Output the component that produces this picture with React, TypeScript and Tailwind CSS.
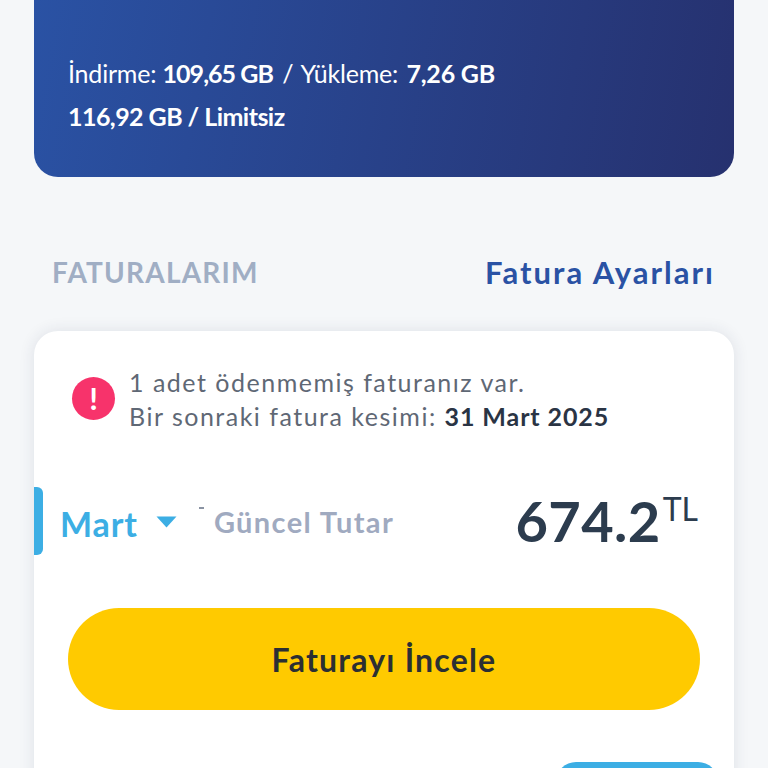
const App = () => {
    return (
        <div className="h-[768px] overflow-hidden bg-[#f5f7f9] px-[34px] font-['Lato',sans-serif]">
            {/* usage card */}
            <div className="h-[177px] rounded-b-[24px] bg-[linear-gradient(100deg,#2a52a4,#26316f)] px-[34px] pt-[54px] text-[25px] text-white">
                <div className="h-[38px] leading-[38px] tracking-[-0.2px]">
                    İndirme: <span className="mr-[3px] font-bold tracking-[-0.95px]">109,65 GB</span> <span className="mr-[2px]">/</span> Yükleme: <span className="ml-[2px] font-bold">7,26 GB</span>
                </div>
                <div className="mt-[5px] h-[38px] font-bold leading-[38px] tracking-[-0.55px]">116,92 GB / Limitsiz</div>
            </div>

            <div className="mt-[74px] flex h-[42px] items-center justify-between pl-[18px] pr-[19px]">
                <div className="text-[28px] font-bold tracking-[1.2px] text-[#a0aec4]">FATURALARIM</div>
                <div className="text-[31px] font-bold tracking-[2px] text-[#2a52a4]">Fatura Ayarları</div>
            </div>

            {/* invoice card */}
            <div className="mt-[38px] h-[460px] rounded-t-[24px] bg-white pt-[34px] shadow-[0_0_16px_rgba(40,50,80,0.11)]">
                <div className="flex items-center pl-[38px]">
                    <div className="mt-[-2px] flex h-[43px] w-[43px] items-center justify-center rounded-full bg-[#f7336b] text-[31px] font-bold leading-none text-white">!</div>
                    <div className="ml-[14px] text-[25px] leading-[34px] tracking-[1.5px] text-[#5f6875]">
                        <div>1 adet ödenmemiş faturanız var.</div>
                        <div>Bir sonraki fatura kesimi: <span className="font-bold tracking-[0.9px] text-[#2a3444]">31 Mart 2025</span></div>
                    </div>
                </div>

                <div className="mt-[54px] flex h-[68px] items-center">
                    <div className="h-[68px] w-[9px] rounded-r-[6px] bg-[#3caee4]" />
                    <div className="ml-[17px] pt-[5px] text-[34px] font-bold tracking-[0.9px] text-[#3caee4]">Mart</div>
                    <svg className="ml-[18px] mt-[2px]" width="21" height="12" viewBox="0 0 21 12">
                        <path d="M0.5 0.5h20L10.5 11.5z" fill="#3caee4" />
                    </svg>
                    <div className="relative ml-[37px] pt-[1px] text-[29px] font-bold tracking-[1.4px] text-[#a0aac0]">
                        Güncel Tutar
                        <span className="absolute left-[-15px] top-[8px] h-[2px] w-[5px] bg-[#8a93a3]" />
                    </div>
                    <div className="ml-auto flex items-start pr-[36px]">
                        <span className="text-[56px] font-bold leading-[68px] tracking-[0.4px] text-[#2c3c4e]">674.2</span>
                        <span className="ml-[2px] text-[32px] leading-[44px] text-[#2c3c4e]">TL</span>
                    </div>
                </div>

                <div className="mx-[34px] mt-[53px] flex h-[102px] items-center justify-center rounded-full bg-[#ffca00] pt-[2px] text-[32px] font-bold tracking-[1.2px] text-[#2b2f33]">
                    Faturayı İncele
                </div>

                <div className="ml-auto mr-[16px] mt-[52px] h-[40px] w-[162px] rounded-t-[20px] bg-[#3caee4]" />
            </div>
        </div>
    )
}

export default App
